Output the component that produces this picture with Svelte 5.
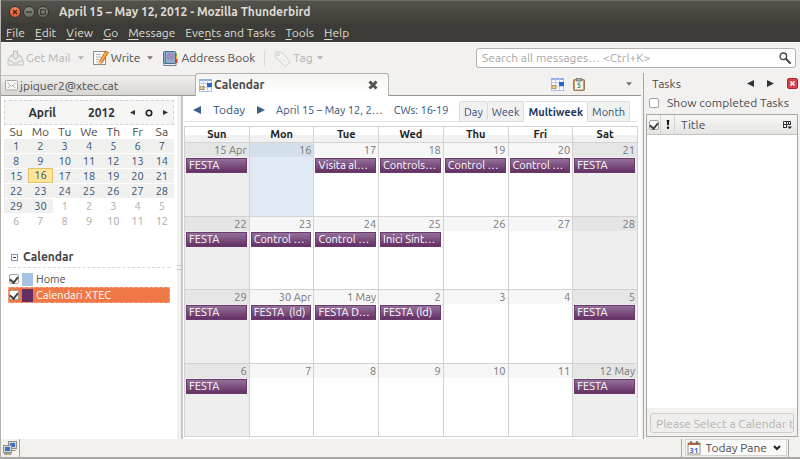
<script>
  const menus = [
    ['', 'F', 'ile'],
    ['', 'E', 'dit'],
    ['', 'V', 'iew'],
    ['', 'G', 'o'],
    ['', 'M', 'essage'],
    ['Eve', 'n', 'ts and Tasks'],
    ['', 'T', 'ools'],
    ['', 'H', 'elp']
  ];

  const weekdays = ['Sun', 'Mon', 'Tue', 'Wed', 'Thu', 'Fri', 'Sat'];
  const views = ['Day', 'Week', 'Multiweek', 'Month'];
  let view = $state('Multiweek');

  // April 2012 starts on a Sunday, the grid runs on into May
  const miniWeeks = [];
  for (let w = 0; w < 6; w++) {
    const week = [];
    for (let d = 1; d <= 7; d++) {
      const n = w * 7 + d;
      week.push({ day: n > 30 ? n - 30 : n, other: n > 30, today: n === 16 });
    }
    miniWeeks.push(week);
  }

  const weeks = [
    [
      { label: '15 Apr', event: 'FESTA' },
      { label: '16', today: true },
      { label: '17', event: 'Visita al…' },
      { label: '18', event: 'Controls…' },
      { label: '19', event: 'Control …' },
      { label: '20', event: 'Control …' },
      { label: '21', event: 'FESTA' }
    ],
    [
      { label: '22', event: 'FESTA' },
      { label: '23', event: 'Control …' },
      { label: '24', event: 'Control …' },
      { label: '25', event: 'Inici Sínt…' },
      { label: '26' },
      { label: '27' },
      { label: '28' }
    ],
    [
      { label: '29', event: 'FESTA' },
      { label: '30 Apr', event: 'FESTA  (ld)' },
      { label: '1 May', event: 'FESTA D…' },
      { label: '2', event: 'FESTA (ld)' },
      { label: '3' },
      { label: '4' },
      { label: '5', event: 'FESTA' }
    ],
    [
      { label: '6', event: 'FESTA' },
      { label: '7' },
      { label: '8' },
      { label: '9' },
      { label: '10' },
      { label: '11' },
      { label: '12 May', event: 'FESTA' }
    ]
  ];

  let calendars = $state([
    { name: 'Home', color: '#a8c2e1', shown: true },
    { name: 'Calendari XTEC', color: '#643064', shown: true }
  ]);
  let selected = $state('Calendari XTEC');
  let showCompleted = $state(false);
  let allDone = $state(true);
  let search = $state('');
</script>

{#snippet calendarIcon()}
  <svg width="13" height="13" viewBox="0 0 13 13" aria-hidden="true">
    <rect x=".5" y=".5" width="12" height="12" fill="#f6f9fe" stroke="#a9c4e8" />
    <path d="M0 1h13" stroke="#8fb2e2" stroke-width="2" />
    <path d="M1 4.500h11M1 8.500h11M4.500 1v11M8.500 1v11" stroke="#bcd0ec" fill="none" />
    <rect x="8" y="4" width="5" height="4" fill="#2a66c8" />
    <rect x="1" y="7.500" width="4" height="3" fill="#ecc98a" stroke="#a98a55" stroke-width=".8" />
  </svg>
{/snippet}

{#snippet arrow(dir, size)}
  <svg width={size} height={size} viewBox="0 0 10 10" aria-hidden="true">
    <path d={dir === 'left' ? 'M10 0v10L0 5z' : dir === 'right' ? 'M0 0v10l10-5z' : 'M0 2h10L5 8z'} fill="currentColor" />
  </svg>
{/snippet}

<div class="window">
  <header class="titlebar">
    <div class="controls">
      <button class="ctl close" aria-label="Close window">
        <svg width="6" height="6" viewBox="0 0 6 6"><path d="M1 1l4 4M5 1L1 5" stroke="#4a1f0c" stroke-width="1.400" /></svg>
      </button>
      <button class="ctl" aria-label="Minimize">
        <svg width="6" height="6" viewBox="0 0 6 6"><path d="M0 3h6" stroke="#3a3935" stroke-width="1.400" /></svg>
      </button>
      <button class="ctl" aria-label="Maximize">
        <svg width="6" height="6" viewBox="0 0 6 6"><rect x=".7" y=".7" width="4.600" height="4.600" fill="none" stroke="#3a3935" stroke-width="1.200" /></svg>
      </button>
    </div>
    <h1>April 15 – May 12, 2012 - Mozilla Thunderbird</h1>
  </header>

  <nav class="menubar">
    {#each menus as [before, key, after]}
      <button>{before}<u>{key}</u>{after}</button>
    {/each}
  </nav>

  <div class="toolbar">
    <button class="tool" disabled>
      <svg width="17" height="16" viewBox="0 0 17 16" aria-hidden="true">
        <path d="M3 6L1 11v4h15v-4l-2-5z" fill="#ededeb" stroke="#c4c3c0" />
        <path d="M1.500 11h3.500l1 2h5l1-2h3.500" fill="none" stroke="#c4c3c0" />
        <path d="M6.500 1h4v4H13L8.500 9.500 4 5h2.500z" fill="#e4e4e2" stroke="#bdbcb9" />
      </svg>
      <span>Get Mail</span>
    </button>
    <button class="drop muted" aria-label="Get Mail menu">{@render arrow('down', 6)}</button>
    <button class="tool">
      <svg width="16" height="16" viewBox="0 0 16 16" aria-hidden="true">
        <rect x=".5" y="1.500" width="12" height="13" fill="#fcfcfb" stroke="#8c8d89" />
        <path d="M3 4.500h5M3 7h5M3 9.500h3M3 12h2" stroke="#aeb0ac" />
        <path d="M12.500 1l3 1.500L9 13l-3 2 .300-3.500z" fill="#f08a24" stroke="#b35f0e" stroke-width=".7" />
        <path d="M6.300 11.500L9 13l-3 2z" fill="#f2dcae" />
        <path d="M13.500 2.500l-5.500 9" stroke="#fbc27c" />
      </svg>
      <span>Write</span>
    </button>
    <button class="drop" aria-label="Write menu">{@render arrow('down', 6)}</button>
    <button class="tool">
      <svg width="17" height="17" viewBox="0 0 17 17" aria-hidden="true">
        <path d="M13 3h2v3h-2z" fill="#7cb342" /><path d="M13 6h2.500v3H13z" fill="#e8c22e" /><path d="M13 9h2.500v4H13z" fill="#d63a2e" />
        <path d="M2 13v2.500h12V13z" fill="#eceff2" stroke="#4b6584" stroke-width=".8" />
        <rect x="1.500" y="1.500" width="12" height="12" rx="1" fill="#8fabcb" stroke="#4a6a94" />
        <path d="M3.500 2v11" stroke="#5f7fa9" />
        <circle cx="8.500" cy="6.500" r="2.900" fill="none" stroke="#b06bab" />
        <circle cx="8.300" cy="6.500" r="1" fill="none" stroke="#b06bab" stroke-width=".8" />
      </svg>
      <span>Address Book</span>
    </button>
    <div class="separator"></div>
    <button class="tool" disabled>
      <svg width="17" height="17" viewBox="0 0 17 17" aria-hidden="true">
        <path d="M1 3.500Q1 1 4 1.500l4 1 7.500 8.500q.5 1-.5 2l-2.500 2.500q-1 .8-2 0L2 8z" fill="#f3f3f2" stroke="#cfcecb" />
        <circle cx="4" cy="4.500" r="1.300" fill="none" stroke="#cfcecb" />
        <path d="M7 7.500l4.500 4.500" stroke="#dcdbd9" />
      </svg>
      <span>Tag</span>
      <i class="muted">{@render arrow('down', 6)}</i>
    </button>
    <div class="search">
      <input type="text" bind:value={search} placeholder="Search all messages… <Ctrl+K>" aria-label="Search all messages" />
      <svg width="12" height="12" viewBox="0 0 12 12" aria-hidden="true">
        <circle cx="4.300" cy="4.300" r="3.300" fill="none" stroke="#494844" stroke-width="1.400" />
        <path d="M6.800 6.800l4.200 4.200" stroke="#494844" stroke-width="2" stroke-linecap="round" />
      </svg>
    </div>
  </div>

  <div class="main">
    <div class="left">
      <div class="tabs">
        <button class="tab">
          <svg width="13" height="11" viewBox="0 0 13 11" aria-hidden="true">
            <rect x=".5" y=".5" width="12" height="9.500" rx="1" fill="#f8f8f6" stroke="#a6a5a1" />
            <path d="M2.500 3l4 3.500 4-3.500M2.500 8l2.500-2M10.500 8L8 6" fill="none" stroke="#b3b2ae" />
          </svg>
          <span>jpiquer2@xtec.cat</span>
        </button>
        <div class="tab active">
          {@render calendarIcon()}
          <span>Calendar</span>
          <button class="tabclose" aria-label="Close tab">
            <svg width="10" height="10" viewBox="0 0 10 10"><path d="M1.500 1.500l7 7M8.500 1.500l-7 7" stroke="#555450" stroke-width="3" /></svg>
          </button>
        </div>
        <div class="tabtools">
          <button aria-label="Calendar tab">{@render calendarIcon()}</button>
          <button aria-label="Tasks tab">
            <svg width="12" height="13" viewBox="0 0 12 13" aria-hidden="true">
              <rect x=".5" y="1.500" width="11" height="11" rx="1" fill="#c79a66" stroke="#9a774c" />
              <rect x="2" y="3" width="8" height="8.500" fill="#f4f6f2" />
              <rect x="3.500" y=".5" width="5" height="2.500" fill="#a9aaa6" stroke="#777873" stroke-width=".8" />
              <path d="M7.500 5H5v2h2v2.500H4.500" fill="none" stroke="#4f9460" />
            </svg>
          </button>
          <button class="alltabs" aria-label="List all tabs">{@render arrow('down', 6)}</button>
        </div>
      </div>

      <div class="content">
        <aside>
          <div class="minihead">
            <b>April</b>
            <b class="year">2012</b>
            <button aria-label="Previous month">{@render arrow('left', 5)}</button>
            <button aria-label="Today">
              <svg width="8" height="8" viewBox="0 0 8 8"><circle cx="4" cy="4" r="2.700" fill="none" stroke="#222" stroke-width="1.600" /></svg>
            </button>
            <button aria-label="Next month">{@render arrow('right', 5)}</button>
          </div>
          <table class="mini">
            <thead>
              <tr>{#each weekdays as d}<th>{d.slice(0, 2)}</th>{/each}</tr>
            </thead>
            <tbody>
              {#each miniWeeks as week}
                <tr>
                  {#each week as d}
                    <td class:other={d.other} class:today={d.today}>{d.day}</td>
                  {/each}
                </tr>
              {/each}
            </tbody>
          </table>

          <div class="listhead">
            <button aria-label="Collapse">
              <svg width="7" height="7" viewBox="0 0 7 7"><rect x=".5" y=".5" width="6" height="6" fill="#fff" stroke="#8f8ebd" /><path d="M2 3.500h3" stroke="#333" /></svg>
            </button>
            <b>Calendar</b>
          </div>
          <ul class="callist">
            {#each calendars as cal}
              <li class:selected={selected === cal.name}>
                <label>
                  <input type="checkbox" bind:checked={cal.shown} />
                  <span class="swatch" style="background: {cal.color}"></span>
                  {cal.name}
                </label>
              </li>
            {/each}
          </ul>
        </aside>
        <div class="splitter"><span></span></div>

        <section class="calendar">
          <div class="calbar">
            <button class="nav" aria-label="Previous">{@render arrow('left', 8)}</button>
            <button class="todaybtn">Today</button>
            <button class="nav" aria-label="Next">{@render arrow('right', 8)}</button>
            <span class="range">April 15 – May 12, 2…</span>
            <span class="cws">CWs: 16-19</span>
            <div class="views">
              {#each views as v}
                <button class:active={view === v} onclick={() => (view = v)}>{v}</button>
              {/each}
            </div>
          </div>
          <table class="month">
            <thead>
              <tr>{#each weekdays as d}<th>{d}</th>{/each}</tr>
            </thead>
            <tbody>
              {#each weeks as week}
                <tr>
                  {#each week as day, i}
                    <td class:weekend={i === 0 || i === 6} class:today={day.today}>
                      <div class="daylabel">{day.label}</div>
                      {#if day.event}<div class="event">{day.event}</div>{/if}
                    </td>
                  {/each}
                </tr>
              {/each}
            </tbody>
          </table>
        </section>
      </div>
    </div>

    <section class="tasks">
      <div class="taskhead">
        <span>Tasks</span>
        <button aria-label="Previous pane">{@render arrow('left', 7)}</button>
        <button aria-label="Next pane">{@render arrow('right', 7)}</button>
        <button class="paneclose" aria-label="Close pane">
          <svg width="11" height="11" viewBox="0 0 11 11"><rect x=".5" y=".5" width="10" height="10" rx="1.500" fill="#d9434b" stroke="#b0222c" /><path d="M3.500 3.500l4 4M7.500 3.500l-4 4" stroke="#fff" stroke-width="1.600" /></svg>
        </button>
      </div>
      <label class="completed">
        <input type="checkbox" bind:checked={showCompleted} />
        Show completed Tasks
      </label>
      <div class="tasklist">
        <div class="columns">
          <span class="col"><input type="checkbox" bind:checked={allDone} aria-label="Completed" /></span>
          <span class="col prio">
            <svg width="4" height="9" viewBox="0 0 4 9" aria-hidden="true"><path d="M.7 0h2.600L2.700 5.500H1.300z" fill="#111" /><circle cx="2" cy="7.700" r="1.200" fill="#111" /></svg>
          </span>
          <span class="coltitle">Title</span>
          <button aria-label="Select columns">
            <svg width="9" height="9" viewBox="0 0 9 9"><path d="M.5 7.500v-6h7V5M.5 4.500h7M3.500 1.500v6M5.500 1.500v3M0 7.500h4" fill="none" stroke="#333" /><path d="M4.500 6.500H9L6.700 9z" fill="#222" /></svg>
          </button>
        </div>
        <div class="taskrows"></div>
        <div class="newtask">
          <input type="text" disabled value="Please Select a Calendar to add tasks" aria-label="New task" />
        </div>
      </div>
    </section>
  </div>

  <footer>
    <button class="online" aria-label="Online status">
      <svg width="14" height="14" viewBox="0 0 14 14" aria-hidden="true">
        <rect x="5.500" y=".5" width="8" height="7" fill="#d8d8d2" stroke="#8d8f88" />
        <rect x="7" y="2" width="5" height="4" fill="#3f6fc2" />
        <path d="M7 9.500h5.500" stroke="#85877f" />
        <rect x=".5" y="4.500" width="8" height="7" fill="#d8d8d2" stroke="#8d8f88" />
        <rect x="2" y="6" width="5" height="4" fill="#3f6fc2" />
        <path d="M1 13h7.500" stroke="#85877f" stroke-width="1.500" />
      </svg>
    </button>
    <div class="todaypane">
      <button>
        <svg width="14" height="14" viewBox="0 0 14 14" aria-hidden="true">
          <rect x="1" y="2" width="12" height="11" fill="#fff" stroke="#9a8a7f" />
          <path d="M1 2h12v2H1z" fill="#b6653f" />
          <path d="M4 0v3M10 0v3" stroke="#666" stroke-width="1.500" />
          <text x="7" y="12" text-anchor="middle" font-size="8" font-weight="700" fill="#2a66b8">31</text>
        </svg>
        Today Pane
        <svg class="chev" width="8" height="6" viewBox="0 0 8 6" aria-hidden="true"><path d="M1 1l3 3 3-3" fill="none" stroke="#222" stroke-width="2" /></svg>
      </button>
    </div>
  </footer>
</div>

<style>
  :global(body) {
    margin: 0;
    background: #f2f1f0;
  }

  .window {
    box-sizing: border-box;
    min-height: 100vh;
    display: flex;
    flex-direction: column;
    border-left: 1px solid #b5b2ae;
    border-bottom: 2px solid #a9a6a3;
    background: #f2f1f0;
    color: #4c4c4c;
    font: 12px/16px Ubuntu, "Open Sans", sans-serif;
  }

  .window * {
    box-sizing: border-box;
  }

  button {
    display: flex;
    align-items: center;
    padding: 0;
    border: 0;
    background: none;
    color: inherit;
    font: inherit;
    white-space: nowrap;
  }

  svg {
    display: block;
    flex: none;
  }

  input[type='checkbox'] {
    appearance: none;
    flex: none;
    width: 10px;
    height: 10px;
    margin: 0;
    border: 1px solid #a5a3a0;
    border-radius: 2px;
    background: #fff;
  }

  input[type='checkbox']:checked::after {
    content: '';
    display: block;
    width: 4px;
    height: 6px;
    margin: 0 auto;
    border: solid #444;
    border-width: 0 2px 2px 0;
    transform: rotate(40deg);
  }

  .titlebar {
    display: flex;
    align-items: center;
    height: 23px;
    padding-left: 8px;
    border-top: 1px solid #6c6b66;
    background: linear-gradient(#53524c, #3f3e39);
    color: #dfdbd2;
  }

  .controls {
    display: flex;
    gap: 2px;
  }

  .ctl {
    justify-content: center;
    width: 12px;
    height: 12px;
    border: 1px solid #33322e;
    border-radius: 50%;
    background: linear-gradient(#8b8a83, #6a6963);
  }

  .ctl.close {
    background: linear-gradient(#f58b62, #e4572a);
  }

  h1 {
    margin: 0 0 0 10px;
    font-size: 12px;
    line-height: 16px;
    font-weight: 600;
  }

  .menubar {
    display: flex;
    gap: 10px;
    height: 19px;
    padding-left: 5px;
    background: #3c3b37;
    color: #dfdbd2;
  }

  .menubar button {
    display: block;
  }

  u {
    text-underline-offset: 2px;
  }

  .toolbar {
    display: flex;
    align-items: center;
    height: 31px;
    padding: 0 4px 0 6px;
    border-top: 1px solid #fbfbfa;
  }

  .tool {
    gap: 2px;
  }

  .tool:disabled,
  .muted {
    color: #b5b3b0;
  }

  .drop {
    margin: 0 9px 0 7px;
    color: #777571;
  }

  .drop.muted {
    color: #b5b3b0;
  }

  .tool i {
    margin-left: 2px;
  }

  .separator {
    width: 1px;
    height: 16px;
    margin: 0 9px;
    background: #dcdad8;
  }

  .search {
    display: flex;
    align-items: center;
    flex: 0 1 320px;
    height: 20px;
    margin-left: auto;
    padding: 0 4px 0 5px;
    border: 1px solid #b4b1ad;
    border-radius: 3px;
    background: #fff;
  }

  .search input {
    flex: 1;
    min-width: 0;
    padding: 0;
    border: 0;
    outline: 0;
    background: none;
    font: inherit;
  }

  .search input::placeholder {
    color: #a9a7a4;
  }

  .main {
    display: flex;
    flex: 1;
  }

  .left {
    display: flex;
    flex-direction: column;
    flex: 1;
    min-width: 0;
  }

  .tabs {
    display: flex;
    height: 23px;
    border-bottom: 1px solid #989693;
  }

  .tab {
    flex: 0 1 194px;
    display: flex;
    align-items: center;
    gap: 2px;
    margin-top: 2px;
    padding: 0 10px 0 4px;
    border-top: 1px solid #c5c3c0;
    background: linear-gradient(#eeedeb, #d8d6d3);
  }

  .tab.active {
    margin: 0 0 -1px;
    padding-left: 3px;
    border: 1px solid #b4b2af;
    border-bottom: 0;
    border-radius: 3px 3px 0 0;
    background: linear-gradient(#f4f4f3, #fff);
    font-weight: 600;
  }

  .tabclose {
    margin-left: auto;
  }

  .tabtools {
    display: flex;
    align-items: center;
    gap: 9px;
    margin-left: auto;
    padding-right: 9px;
    color: #777571;
  }

  .alltabs {
    margin-left: 32px;
  }

  .content {
    display: flex;
    flex: 1;
    background: #fff;
  }

  aside {
    flex: none;
    width: 176px;
    padding: 4px 3px;
  }

  .minihead {
    display: flex;
    align-items: center;
    justify-content: flex-end;
    gap: 10px;
    height: 25px;
    padding-right: 5px;
    border: 1px dashed #d4d3d1;
    background: #f5f5f4;
    color: #333;
  }

  .minihead .year {
    margin: 0 5px 0 22px;
  }

  .minihead b,
  .listhead b {
    font-weight: 600;
  }

  .mini {
    width: 100%;
    border-spacing: 0;
    table-layout: fixed;
    line-height: 14px;
    text-align: center;
  }

  .mini th {
    padding: 0;
    font-weight: 400;
    line-height: 13px;
  }

  .mini td {
    height: 15px;
    padding: 0;
    border-top: 1px solid #fff;
    background: #f0f0ef;
    color: #325078;
    font-size: 11px;
  }

  .mini td.other {
    background: #fff;
    color: #adaba9;
  }

  .mini td.today {
    border: 1px solid #e0c268;
    background: #ffe69a;
    line-height: 13px;
  }

  .listhead {
    display: flex;
    align-items: center;
    gap: 5px;
    height: 20px;
    margin: 20px 4px 0;
    padding: 0 3px 1px;
    border-bottom: 1px dashed #d8d6d4;
    color: #444;
  }

  .callist {
    margin: 3px 4px 0;
    padding: 0;
    list-style: none;
  }

  .callist li {
    border: 1px dashed transparent;
    font-size: 11px;
    line-height: 14px;
  }

  .callist label {
    display: flex;
    align-items: center;
    gap: 3px;
  }

  .callist li.selected {
    border-color: #f6a886;
    background: #f07746;
    color: #fff;
  }

  .swatch {
    width: 11px;
    height: 13px;
  }

  .splitter {
    display: flex;
    align-items: center;
    width: 6px;
    border-right: 2px solid #c9c7c5;
    background: #f2f1f0;
  }

  .splitter span {
    width: 4px;
    height: 5px;
    border: solid #c9c7c5;
    border-width: 1px 0;
  }

  .calendar {
    display: flex;
    flex-direction: column;
    flex: 1;
    min-width: 0;
    padding: 0 3px 2px 1px;
  }

  .calbar {
    display: flex;
    align-items: center;
    height: 26px;
    padding-top: 3px;
    margin-bottom: 4px;
    border-bottom: 1px solid #e6e5e4;
    color: #325078;
    font-size: 11px;
  }

  .nav {
    margin-left: 9px;
    color: #3b5f8c;
  }

  .todaybtn {
    margin: 0 3px 0 12px;
    font-size: 12px;
  }

  .range {
    margin-left: 11px;
  }

  .cws {
    margin-left: 11px;
  }

  .views {
    display: flex;
    align-self: flex-end;
    margin: 0 8px -1px auto;
  }

  .views button {
    height: 21px;
    padding: 0 4px;
    border: 1px solid #dddcdb;
    border-left-width: 0;
    border-radius: 2px 2px 0 0;
    background: #f1f1f0;
  }

  .views button:first-child {
    border-left-width: 1px;
  }

  .views button.active {
    border-bottom-color: #fff;
    background: #fff;
    color: #1c3a68;
    font-weight: 700;
  }

  .month {
    flex: 1;
    width: 100%;
    border: solid #d2d2d2;
    border-width: 1px 0 0 1px;
    border-spacing: 0;
    table-layout: fixed;
  }

  .month th {
    height: 16px;
    padding: 0;
    border: solid #d2d2d2;
    border-width: 0 1px 1px 0;
    background: linear-gradient(#fff 50%, #f1f1f1 50%);
    color: #222;
    font-size: 11px;
    line-height: 15px;
    font-weight: 600;
  }

  .month td {
    height: 73px;
    padding: 0;
    border: solid #d2d2d2;
    border-width: 0 1px 1px 0;
    vertical-align: top;
  }

  .daylabel {
    height: 14px;
    padding-right: 2px;
    background: #f6f6f6;
    color: #777;
    font-size: 11px;
    line-height: 15px;
    text-align: right;
  }

  .weekend {
    background: #eee;
  }

  .weekend .daylabel {
    background: #e5e5e5;
  }

  td.today {
    background: #dfeaf4;
  }

  .month .today .daylabel {
    background: #d3dfea;
  }

  .event {
    height: 15px;
    margin: 1px 2px 0 1px;
    padding-left: 2px;
    overflow: hidden;
    border: 1px solid #6b3a6c;
    background: linear-gradient(#93709a, #643064);
    color: #fff;
    font-size: 11px;
    line-height: 13px;
    white-space: pre;
  }

  .tasks {
    display: flex;
    flex-direction: column;
    flex: none;
    width: 157px;
    margin-left: 2px;
    border-left: 1px solid #a9a7a4;
    padding: 0 2px 2px;
  }

  .taskhead {
    display: flex;
    align-items: center;
    height: 21px;
    padding-left: 6px;
  }

  .taskhead span {
    flex: 1;
  }

  .taskhead button {
    margin-right: 13px;
    color: #2e3436;
  }

  .taskhead .paneclose {
    margin: 0;
  }

  .completed {
    display: flex;
    align-items: center;
    gap: 8px;
    height: 17px;
    padding-left: 3px;
  }

  .tasklist {
    display: flex;
    flex-direction: column;
    flex: 1;
    margin-top: 3px;
    border: 1px solid #a9a7a4;
    background: #fff;
  }

  .columns {
    display: flex;
    height: 20px;
    border-bottom: 1px solid #c4c2bf;
    background: linear-gradient(#f8f8f7, #e6e4e2);
  }

  .columns > * {
    display: flex;
    align-items: center;
  }

  .col {
    width: 14px;
    padding-left: 2px;
    border-right: 1px solid #d5d3d0;
  }

  .prio {
    padding-left: 5px;
  }

  .coltitle {
    flex: 1;
    padding-left: 6px;
  }

  .columns button {
    padding-right: 5px;
  }

  .taskrows {
    flex: 1;
  }

  .newtask {
    padding: 5px 3px 3px;
    background: #f2f1f0;
  }

  .newtask input {
    display: block;
    width: 100%;
    height: 20px;
    padding: 0 0 0 5px;
    border: 1px solid #cecbc8;
    border-radius: 3px;
    background: #efeeed;
    color: #b5b3b0;
    font: inherit;
  }

  footer {
    display: flex;
    justify-content: space-between;
    height: 18px;
  }

  .online {
    padding: 0 2px;
    border-right: 1px solid #a9a7a4;
  }

  .todaypane {
    margin-right: 11px;
    padding: 0 1px 0 3px;
    border: solid #a9a7a4;
    border-width: 0 1px;
  }

  .todaypane button {
    gap: 4px;
    height: 17px;
    padding: 0 5px 0 1px;
    border: 1px solid #d5d3d0;
    background: #fafaf9;
  }

  .chev {
    margin-left: 2px;
  }
</style>
